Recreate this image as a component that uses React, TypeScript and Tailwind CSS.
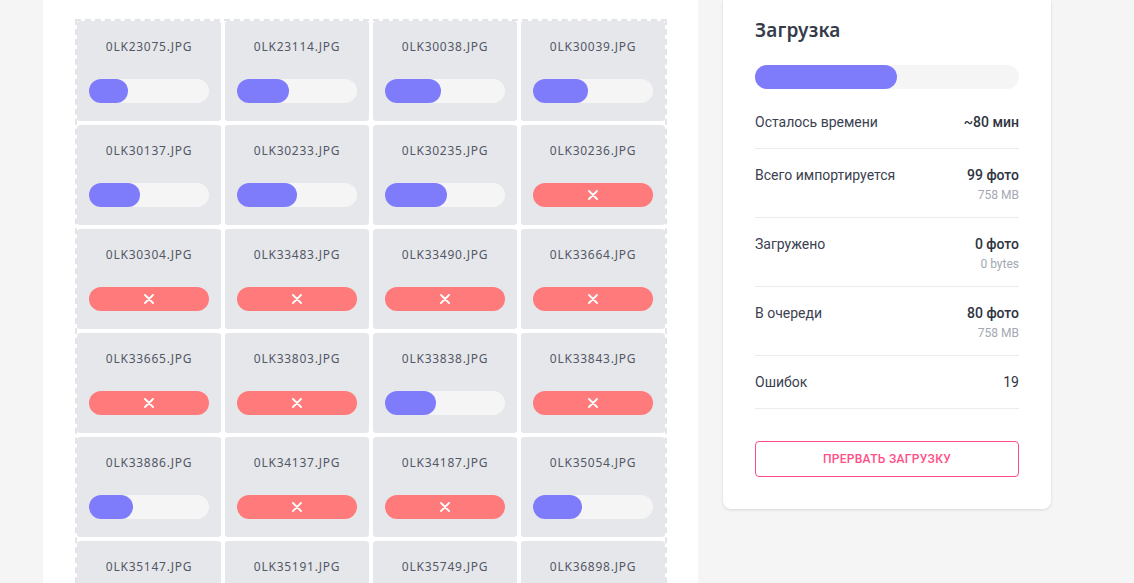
import React from "react";

type Item = { name: string; p?: number; err?: boolean };

const items: Item[] = [
  { name: "0LK23075.JPG", p: 39 },
  { name: "0LK23114.JPG", p: 52 },
  { name: "0LK30038.JPG", p: 56 },
  { name: "0LK30039.JPG", p: 55 },
  { name: "0LK30137.JPG", p: 51 },
  { name: "0LK30233.JPG", p: 60 },
  { name: "0LK30235.JPG", p: 62 },
  { name: "0LK30236.JPG", err: true },
  { name: "0LK30304.JPG", err: true },
  { name: "0LK33483.JPG", err: true },
  { name: "0LK33490.JPG", err: true },
  { name: "0LK33664.JPG", err: true },
  { name: "0LK33665.JPG", err: true },
  { name: "0LK33803.JPG", err: true },
  { name: "0LK33838.JPG", p: 51 },
  { name: "0LK33843.JPG", err: true },
  { name: "0LK33886.JPG", p: 44 },
  { name: "0LK34137.JPG", err: true },
  { name: "0LK34187.JPG", err: true },
  { name: "0LK35054.JPG", p: 49 },
  { name: "0LK35147.JPG", p: 40 },
  { name: "0LK35191.JPG", p: 50 },
  { name: "0LK35749.JPG", err: true },
  { name: "0LK36898.JPG", p: 45 },
];

function XIcon() {
  return (
    <svg width="10" height="10" viewBox="0 0 10 10" fill="none">
      <path d="M1 1L9 9M9 1L1 9" stroke="white" strokeWidth="1.8" strokeLinecap="round" />
    </svg>
  );
}

function Cell({ it }: { it: Item }) {
  return (
    <div className="bg-[#e6e7eb] rounded-[3px] h-[100px] flex flex-col items-center pt-[18px] px-3">
      <div className="text-[12px] leading-4 text-[#525866] font-['Noto_Sans',sans-serif] tracking-[0.75px]">
        {it.name}
      </div>
      <div className="mt-6 w-full h-6">
        {it.err ? (
          <div className="w-full h-6 rounded-full bg-[#ff7a7b] flex items-center justify-center">
            <XIcon />
          </div>
        ) : (
          <div className="w-full h-6 rounded-full bg-[#f5f5f6]">
            <div className="h-6 rounded-full bg-[#7f7cfc]" style={{ width: `${it.p}px` }} />
          </div>
        )}
      </div>
    </div>
  );
}

function Row({ label, value, sub, bold = true }: { label: string; value: string; sub?: string; bold?: boolean }) {
  return (
    <div className="flex justify-between py-4 border-b border-[#ececee]">
      <div className="text-[14px] leading-5 text-[#3b4150]">{label}</div>
      <div className="flex flex-col items-end">
        <div className={`text-[14px] leading-5 text-[#2f3440] ${bold ? "font-medium" : ""}`}>{value}</div>
        {sub && <div className="text-[12px] leading-4 mt-[2px] -mb-[2px] text-[#a3a8b3]">{sub}</div>}
      </div>
    </div>
  );
}

export default function App() {
  return (
    <div className="w-[1134px] h-[583px] overflow-hidden bg-[#f5f5f5] flex items-start font-['Roboto',sans-serif]">
      <div className="ml-[43px] w-[655px] h-[583px] bg-white pl-[32px] pt-[19px]">
        <div className="w-[592px] border-2 border-dashed border-[#e3e4e8] grid grid-cols-4 gap-1">
          {items.map((it) => (
            <Cell key={it.name} it={it} />
          ))}
        </div>
      </div>
      <div className="ml-[25px] w-[328px] bg-white rounded-b-lg shadow-[0_1px_3px_rgba(0,0,0,0.12)] px-8 pt-4 pb-8">
        <div className="text-[19px] leading-7 font-semibold text-[#353b48] font-['Noto_Sans',sans-serif] tracking-[0.2px]">Загрузка</div>
        <div className="mt-[21px] h-6 rounded-full bg-[#f5f5f6]">
          <div className="h-6 rounded-full bg-[#7f7cfc] w-[142px]" />
        </div>
        <div className="mt-[7px]">
          <Row label="Осталось времени" value="~80 мин" />
          <Row label="Всего импортируется" value="99 фото" sub="758 MB" />
          <Row label="Загружено" value="0 фото" sub="0 bytes" />
          <Row label="В очереди" value="80 фото" sub="758 MB" />
          <Row label="Ошибок" value="19" bold={false} />
        </div>
        <button className="mt-8 w-full h-9 rounded-[4px] border border-[#ff4f86] text-[#ff4f86] text-[12px] font-medium tracking-[0.3px] uppercase">
          Прервать загрузку
        </button>
      </div>
    </div>
  );
}
